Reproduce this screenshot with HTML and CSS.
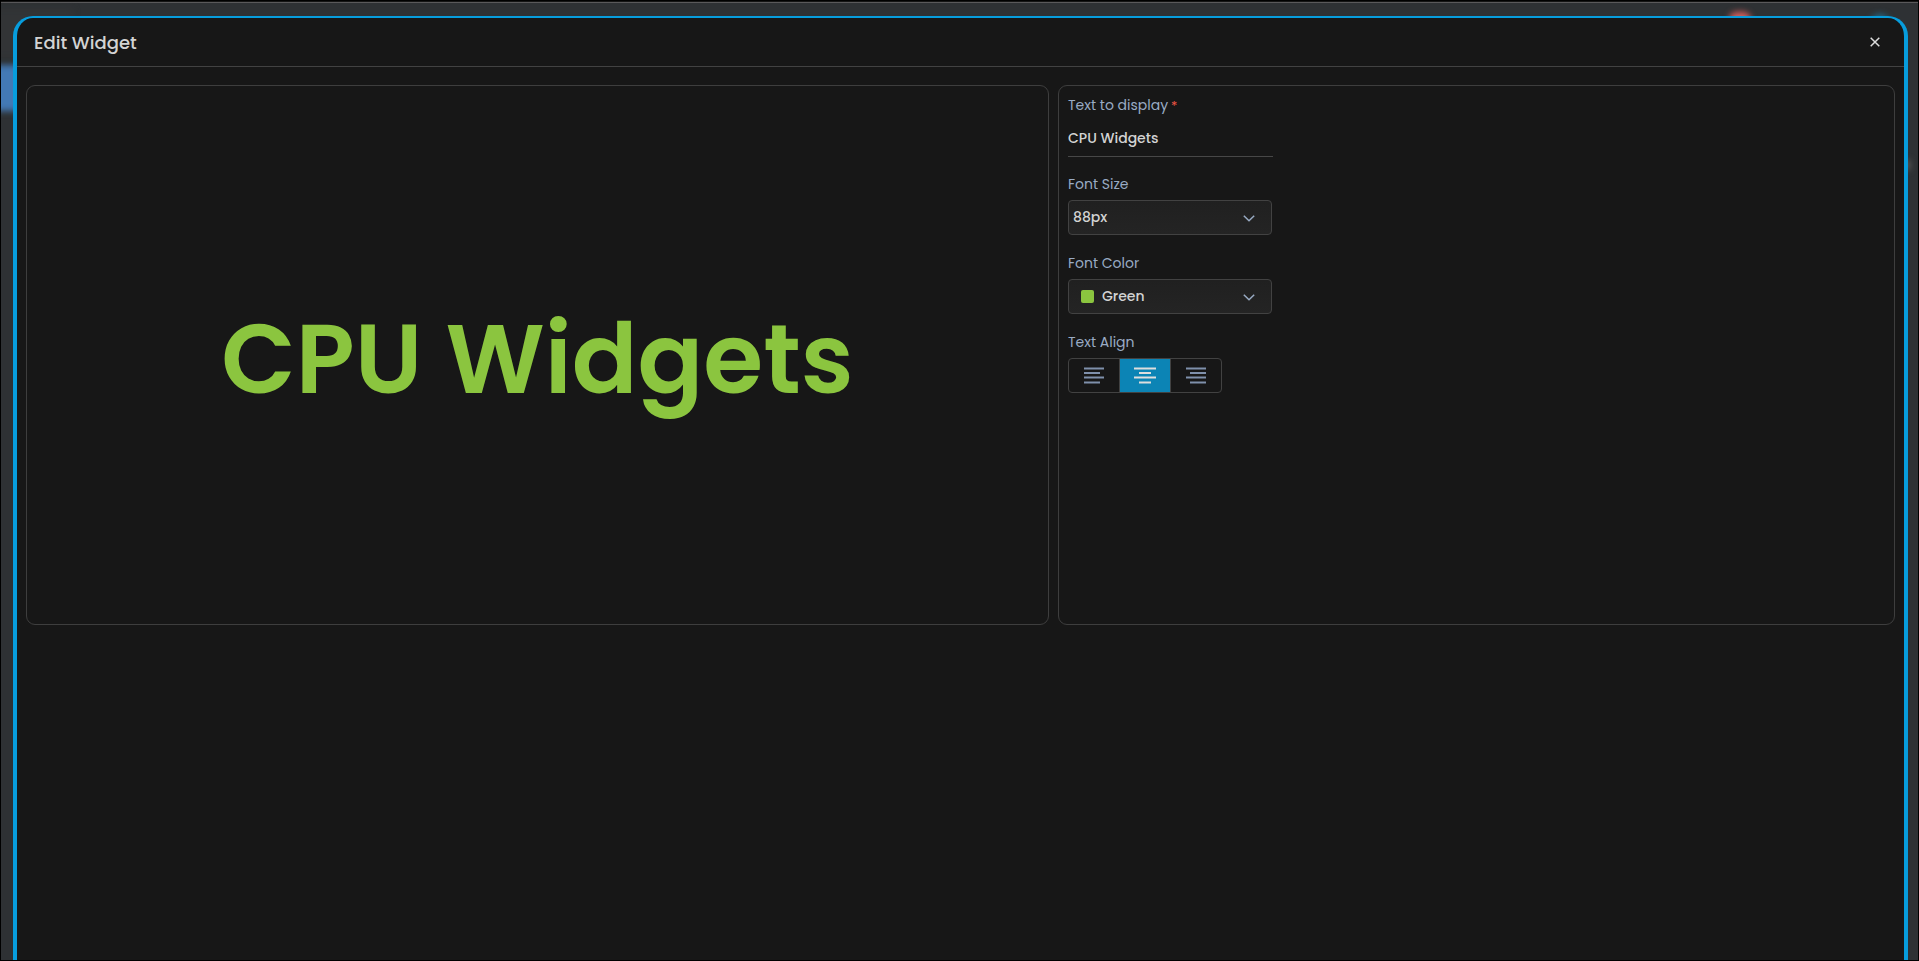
FILE: index.html
```html
<!DOCTYPE html>
<html lang="en">
<head>
<meta charset="utf-8">
<title>Edit Widget</title>
<link rel="stylesheet" href="styles.css">
</head>
<body>
<div class="screen">
  <div class="backdrop" aria-hidden="true">
    <span class="glow glow-tab"></span>
    <span class="glow glow-title"></span>
    <span class="glow glow-alert"></span>
    <span class="glow glow-user"></span>
    <span class="glow glow-item"></span>
  </div>
  <main class="modal" role="dialog" aria-labelledby="dialog-title">
    <header class="modal-header">
      <h1 class="modal-title" id="dialog-title">Edit Widget</h1>
      <button class="close" type="button" aria-label="Close">
        <svg width="10" height="10" viewBox="0 0 10 10"><path d="M.7.7 9.3 9.3M9.3.7.7 9.3" fill="none" stroke="currentColor" stroke-width="1.5"/></svg>
      </button>
    </header>
    <div class="modal-body">
      <section class="panel preview">
        <p class="preview-text">CPU Widgets</p>
      </section>
      <form class="panel settings">
        <div class="field">
          <label class="label" for="text">Text to display<span class="required">*</span></label>
          <input class="text-input" id="text" type="text" value="CPU Widgets">
        </div>
        <div class="field">
          <label class="label" for="size">Font Size</label>
          <div class="select-box">
            <select class="select" id="size"><option>88px</option></select>
            <svg class="chevron" width="12" height="7" viewBox="0 0 12 7"><path d="M.8.8 6 5.8 11.2.8" fill="none" stroke="currentColor" stroke-width="1.5"/></svg>
          </div>
        </div>
        <div class="field">
          <label class="label" for="color">Font Color</label>
          <div class="select-box">
            <select class="select select-color" id="color"><option>Green</option></select>
            <span class="swatch"></span>
            <svg class="chevron" width="12" height="7" viewBox="0 0 12 7"><path d="M.8.8 6 5.8 11.2.8" fill="none" stroke="currentColor" stroke-width="1.5"/></svg>
          </div>
        </div>
        <div class="field">
          <span class="label" id="align-label">Text Align</span>
          <div class="align-group" role="group" aria-labelledby="align-label">
            <button class="align" type="button" aria-label="Left" aria-pressed="false">
              <svg width="22" height="17" viewBox="0 0 22 17"><path d="M1 1.5H21M1 6H17M1 10.5H21M1 15.5H17" stroke="currentColor" stroke-width="2"/></svg>
            </button>
            <button class="align active" type="button" aria-label="Center" aria-pressed="true">
              <svg width="22" height="17" viewBox="0 0 22 17"><path d="M0 1.5H22M5 6H17M0 10.5H22M5 15.5H17" stroke="currentColor" stroke-width="2"/></svg>
            </button>
            <button class="align" type="button" aria-label="Right" aria-pressed="false">
              <svg width="22" height="17" viewBox="0 0 22 17"><path d="M1 1.5H21M5 6H21M1 10.5H21M5 15.5H21" stroke="currentColor" stroke-width="2"/></svg>
            </button>
          </div>
        </div>
      </form>
    </div>
  </main>
</div>
</body>
</html>
```
FILE: styles.css
```css
* { box-sizing: border-box; }

body {
  margin: 0;
  background: #000;
  color: #d3d3d3;
  font: 400 14px/21px Poppins, Inter, sans-serif;
}

.screen {
  position: relative;
  display: flex;
  height: 100vh;
  padding: 15px 10px 0 12px;
  overflow: hidden;
  border: 1px solid #000;
  background: #2e3134;
}

.backdrop {
  position: absolute;
  inset: 0;
  overflow: hidden;
  border-top: 1px solid #151515;
  background: linear-gradient(#5a595b 1px, #2e3134 1px);
}

.glow { position: absolute; filter: blur(3px); }
.glow-tab { left: -10px; top: 63px; width: 40px; height: 46px; background: #4379b5; }
.glow-title { left: -10px; top: 6px; width: 82px; height: 50px; background: #323436; }
.glow-alert { right: 167px; top: 10px; width: 22px; height: 16px; border-radius: 8px; background: #d9605d; }
.glow-user { right: 28px; top: 12px; width: 20px; height: 20px; border-radius: 10px; background: #246a88; }
.glow-item { right: 8px; top: 158px; width: 8px; height: 10px; background: #5c5b58; }

.modal {
  position: relative;
  flex: 1;
  border: 4px solid #079ddd;
  border-top-width: 2px;
  border-bottom: 0;
  border-radius: 20px 20px 0 0;
  background: #171717;
}

.modal-header {
  display: flex;
  align-items: center;
  justify-content: space-between;
  height: 49px;
  padding: 0 17px;
  border-bottom: 1px solid #424242;
}

.modal-title { margin: 0; font-size: 18px; line-height: 27px; font-weight: 500; }

.close {
  display: flex;
  align-items: center;
  justify-content: center;
  width: 24px;
  height: 24px;
  padding: 0;
  border: 0;
  background: none;
  color: #dcdcdc;
}

.modal-body {
  display: grid;
  grid-template-columns: 55fr 45fr;
  gap: 9px;
  padding: 18px 9px;
}

.panel {
  min-width: 0;
  min-height: 540px;
  padding: 9px;
  border: 1px solid #3e3e3e;
  border-radius: 9px;
}

.preview { display: flex; align-items: center; justify-content: center; padding-top: 17px; }
.preview-text { margin: 0; color: #8bc53f; font-size: 97px; line-height: 132px; font-weight: 600; }

.settings { display: grid; grid-auto-rows: 61px; align-content: start; gap: 18px; }
.field { display: flex; flex-direction: column; align-items: flex-start; gap: 5px; }
.label { color: #99abc4; }
.required { margin-left: 3px; color: #f05545; font-size: 13px; }

.text-input {
  flex: none;
  width: 205px;
  height: 36px;
  padding: 0;
  border: 0;
  border-bottom: 1px solid #474747;
  background: none;
  color: inherit;
  font: inherit;
  font-weight: 500;
}

.select-box { position: relative; width: 204px; }
.select {
  display: block;
  width: 100%;
  height: 35px;
  padding: 0 30px 0 4px;
  appearance: none;
  border: 1px solid #424242;
  border-radius: 4px;
  background: linear-gradient(#202020, #242424);
  color: inherit;
  font: inherit;
  font-weight: 500;
}
.select-color { padding-left: 33px; }
.chevron { position: absolute; right: 17px; top: 15px; color: #99abc4; pointer-events: none; }
.swatch { position: absolute; left: 13px; top: 11px; width: 13px; height: 13px; border-radius: 2px; background: #8bc53f; }

.align-group { display: flex; overflow: hidden; border: 1px solid #424242; border-radius: 4px; }
.align {
  display: flex;
  align-items: center;
  justify-content: center;
  width: 50px;
  height: 33px;
  padding: 0;
  border: 0;
  background: none;
  color: #7f90ab;
}
.align.active { width: 52px; border: solid #424242; border-width: 0 1px; background: #0c84b5; color: #dedede; }
```
